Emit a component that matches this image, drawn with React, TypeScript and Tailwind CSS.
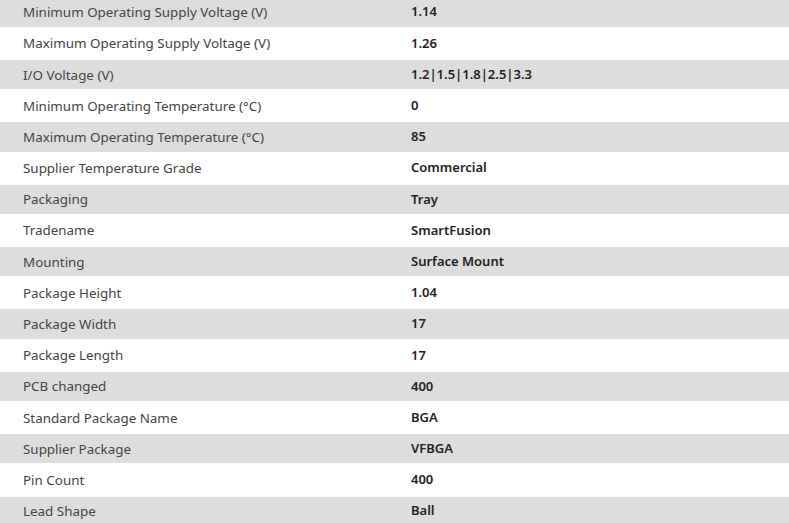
import React from "react";

const rows: [string, string][] = [
  ["Minimum Operating Supply Voltage (V)", "1.14"],
  ["Maximum Operating Supply Voltage (V)", "1.26"],
  ["I/O Voltage (V)", "1.2|1.5|1.8|2.5|3.3"],
  ["Minimum Operating Temperature (°C)", "0"],
  ["Maximum Operating Temperature (°C)", "85"],
  ["Supplier Temperature Grade", "Commercial"],
  ["Packaging", "Tray"],
  ["Tradename", "SmartFusion"],
  ["Mounting", "Surface Mount"],
  ["Package Height", "1.04"],
  ["Package Width", "17"],
  ["Package Length", "17"],
  ["PCB changed", "400"],
  ["Standard Package Name", "BGA"],
  ["Supplier Package", "VFBGA"],
  ["Pin Count", "400"],
  ["Lead Shape", "Ball"],
];

export default function App() {
  return (
    <div
      className="w-[789px] h-[523px] overflow-hidden bg-white"
      style={{ fontFamily: '"Noto Sans", "Open Sans", sans-serif' }}
    >
      <div className="mt-[-2.4px] flex flex-col gap-[2px]">
        {rows.map(([k, v], i) => (
          <div
            key={k}
            className={`grid grid-cols-[411px_1fr] items-center h-[29.2px] ${
              i % 2 === 0 ? "bg-[#dddddd]" : "bg-white"
            }`}
          >
            <div className="pl-[23px] text-[13.4px] text-[#444444]">{k}</div>
            <div className="text-[13px] font-semibold text-[#222222]">{v}</div>
          </div>
        ))}
      </div>
    </div>
  );
}
